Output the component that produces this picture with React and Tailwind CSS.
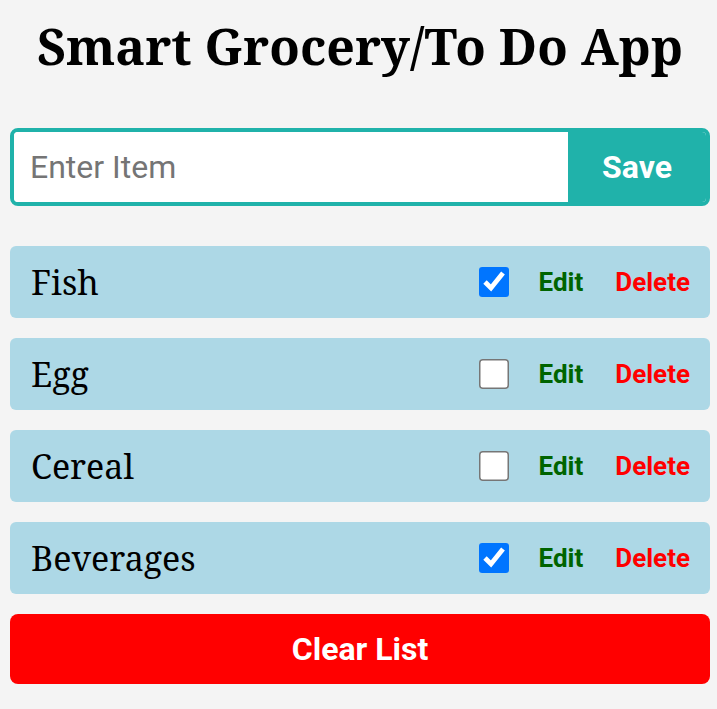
import { useState } from 'react';

const initialItems = [
  { id: 1, name: 'Fish', done: true },
  { id: 2, name: 'Egg', done: false },
  { id: 3, name: 'Cereal', done: false },
  { id: 4, name: 'Beverages', done: true },
];

const serif = "font-['Noto_Serif','DejaVu_Serif',serif]";
const sans = "font-['Roboto','Liberation_Sans',sans-serif]";

const App = () => {
  const [items, setItems] = useState(initialItems);
  const [text, setText] = useState('');

  const toggle = (id) => {
    setItems(items.map((it) => (it.id === id ? { ...it, done: !it.done } : it)));
  };

  return (
    <div className="min-h-[709px] bg-[#f4f4f4] pl-[10px] pr-[7px] pt-[14px] pb-6">
      <h1 className={`${serif} text-center text-[50px] font-bold leading-[64px] text-black [font-stretch:condensed]`}>
        Smart Grocery/To Do App
      </h1>

      {/* input row */}
      <div className="mt-[50px] flex h-[78px] overflow-hidden rounded-lg border-4 border-[#20b2aa] bg-white">
        <input
          value={text}
          onChange={(e) => setText(e.target.value)}
          placeholder="Enter Item"
          className={`${sans} min-w-0 flex-1 bg-white px-4 text-[32px] text-black outline-none placeholder:text-[#757575]`}
        />
        <button className={`${sans} w-[138px] bg-[#20b2aa] text-[32px] font-bold text-white`}>
          Save
        </button>
      </div>

      {/* list */}
      <div className="mt-10 flex flex-col gap-5">
        {items.map((item) => (
          <div
            key={item.id}
            className="flex h-[72px] items-center rounded-md bg-[#add8e6] pl-[21px] pr-5"
          >
            <span className={`${serif} flex-1 text-[34px] text-black`}>{item.name}</span>
            <input
              type="checkbox"
              checked={item.done}
              onChange={() => toggle(item.id)}
              className="mx-[5px] h-5 w-5 scale-150 accent-[#0075ff]"
            />
            <button className={`${sans} ml-[30px] text-[26px] font-bold text-[#006400]`}>Edit</button>
            <button className={`${sans} ml-[32px] text-[26px] font-bold text-[#ff0000]`}>Delete</button>
          </div>
        ))}
      </div>

      <button
        onClick={() => setItems([])}
        className={`${sans} mt-5 h-[70px] w-full rounded-lg bg-[#ff0000] text-[32px] font-bold text-white`}
      >
        Clear List
      </button>
    </div>
  );
};

export default App;
